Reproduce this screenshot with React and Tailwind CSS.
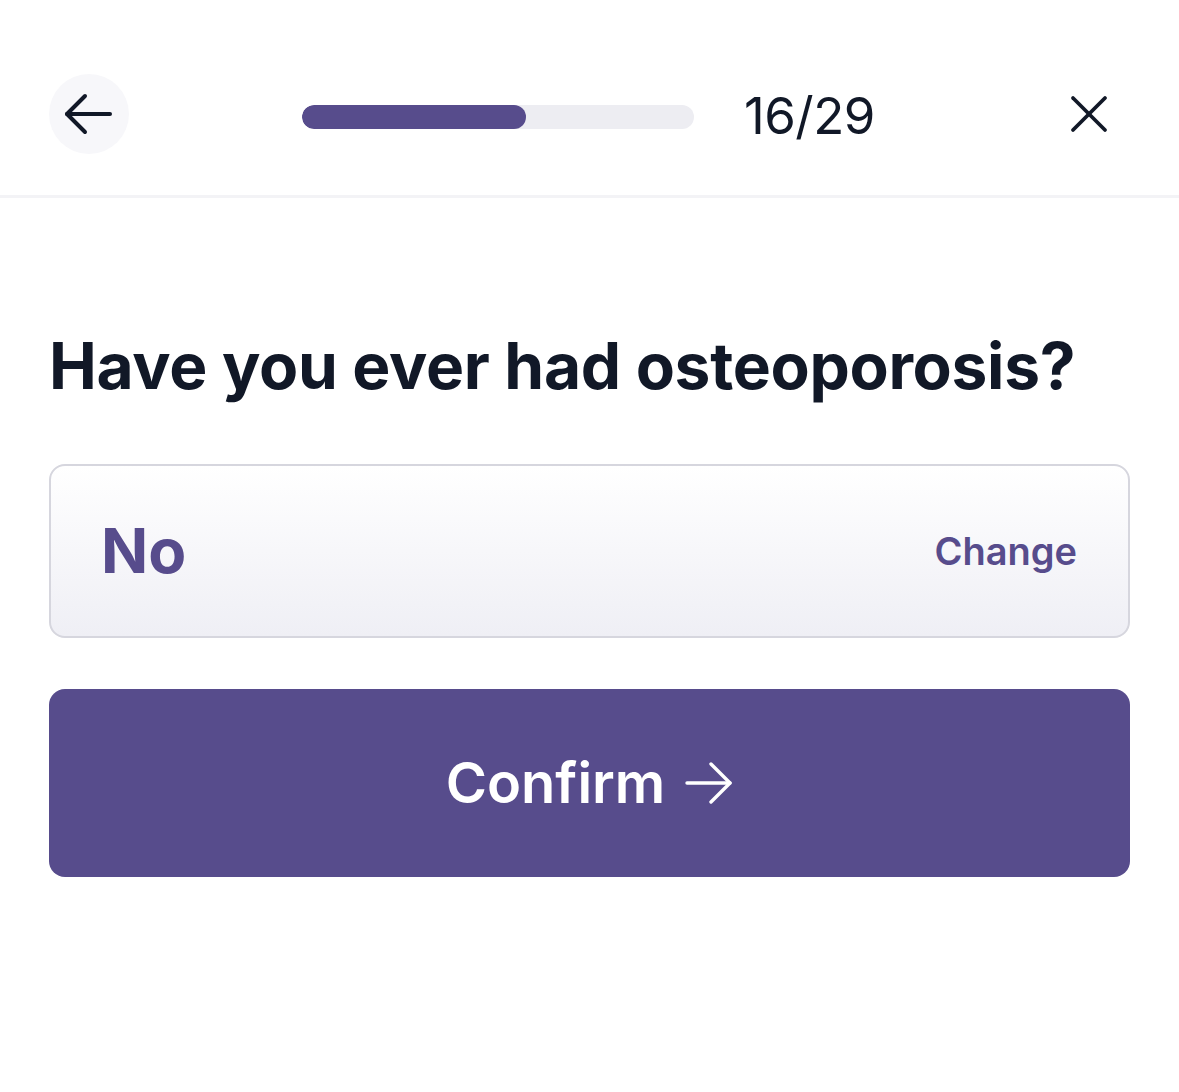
export default function App() {
  return (
    <div className="w-[1179px] h-[1092px] bg-white" style={{ fontFamily: "Inter, 'Noto Sans', sans-serif" }}>
      <header className="h-[198px] border-b-[3px] border-[#f3f3f6] flex items-center pl-[49px] pr-[70px] pt-[52px] pb-[20px] box-border">
        <button className="w-[80px] h-[80px] rounded-full bg-[#f7f7fa] flex items-center justify-center">
          <svg width="50" height="50" viewBox="0 0 50 50" fill="none" stroke="#111827" strokeWidth="4" strokeLinecap="round" strokeLinejoin="round">
            <path d="M46 25H3" />
            <path d="M21 7 3 25l18 18" />
          </svg>
        </button>
        <div className="ml-[173px] mt-[6px] w-[392px] h-[24px] rounded-full bg-[#ededf2] overflow-hidden">
          <div className="h-full w-[224px] rounded-full bg-[#574c8c]" />
        </div>
        <div className="ml-[50px] mt-[4px] text-[51px] leading-none text-[#111827] font-normal tracking-[-0.5px]">16/29</div>
        <div className="flex-1" />
        <svg width="40" height="40" viewBox="0 0 40 40" fill="none" stroke="#111827" strokeWidth="3.8" strokeLinecap="round">
          <path d="M4 4 36 36" />
          <path d="M36 4 4 36" />
        </svg>
      </header>
      <main className="px-[49px] pt-[131px]">
        <h1 className="text-[64px] leading-[74px] font-bold text-[#111827] tracking-[-0.3px]">Have you ever had osteoporosis?</h1>
        <div className="mt-[61px] h-[174px] rounded-[16px] border-2 border-[#d6d6de] bg-gradient-to-b from-white to-[#efeff5] flex items-center justify-between pl-[50px] pr-[51px]">
          <span className="text-[62px] font-bold text-[#574c8c] leading-none">No</span>
          <span className="text-[38px] font-semibold text-[#574c8c] leading-none">Change</span>
        </div>
        <button className="mt-[51px] w-full h-[188px] rounded-[16px] bg-[#574c8c] flex items-center justify-center gap-[20px] text-white">
          <span className="text-[56px] font-semibold leading-none">Confirm</span>
          <svg width="48" height="48" viewBox="0 0 48 48" fill="none" stroke="white" strokeWidth="3.4" strokeLinecap="round" strokeLinejoin="round">
            <path d="M2 24h43" />
            <path d="M26 5l19 19-19 19" />
          </svg>
        </button>
      </main>
    </div>
  );
}
